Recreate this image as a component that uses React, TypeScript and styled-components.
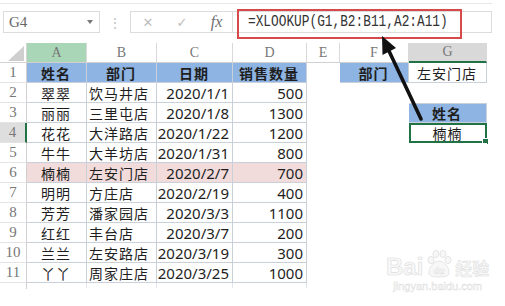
import React from 'react';
import styled, { createGlobalStyle } from 'styled-components';

const GlobalStyle = createGlobalStyle`
  html, body {
    margin: 0;
    padding: 0;
    background: #fff;
  }
  body {
    font-family: "Noto Sans CJK SC", "Noto Sans", sans-serif;
  }
`;

const cjk = `"Noto Sans CJK SC", "Noto Sans", sans-serif`;
const serif = `"Liberation Serif", "DejaVu Serif", serif`;
const gridLine = '#c9d0da';
const excelGreen = '#217346';

type Row = {
  a: string;
  b: string;
  c: string;
  d: string;
  pink?: boolean;
};

const rows: Row[] = [
  { a: '翠翠', b: '饮马井店', c: '2020/1/1', d: '500' },
  { a: '丽丽', b: '三里屯店', c: '2020/1/8', d: '1300' },
  { a: '花花', b: '大洋路店', c: '2020/1/22', d: '1200' },
  { a: '牛牛', b: '大羊坊店', c: '2020/1/31', d: '800' },
  { a: '楠楠', b: '左安门店', c: '2020/2/7', d: '700', pink: true },
  { a: '明明', b: '方庄店', c: '2020/2/19', d: '400' },
  { a: '芳芳', b: '潘家园店', c: '2020/3/3', d: '1100' },
  { a: '红红', b: '丰台店', c: '2020/3/7', d: '200' },
  { a: '兰兰', b: '左安路店', c: '2020/3/19', d: '300' },
  { a: '丫丫', b: '周家庄店', c: '2020/3/25', d: '1000' },
];

const columns = ['A', 'B', 'C', 'D', 'E', 'F', 'G'];

export default function App() {
  return (
    <Page>
      <GlobalStyle />
      <TopStrip />
      <FormulaBar>
        <NameBox>
          G4
          <Caret />
        </NameBox>
        <Dots>⋮</Dots>
        <FuncBox>
          <FuncIcon>✕</FuncIcon>
          <FuncIcon>✓</FuncIcon>
          <Fx>fx</Fx>
        </FuncBox>
        <FormulaInput>
          <Formula>=XLOOKUP(G1,B2:B11,A2:A11)</Formula>
          <Highlight />
        </FormulaInput>
      </FormulaBar>

      <Sheet>
        <Corner>
          <CornerTriangle />
        </Corner>
        {columns.map((col) => (
          <ColHead key={col} $green={col === 'A'} $selected={col === 'G'}>
            {col}
          </ColHead>
        ))}

        <RowHead>1</RowHead>
        <Cell $fill="blue" $line $bold>姓名</Cell>
        <Cell $fill="blue" $line $bold>部门</Cell>
        <Cell $fill="blue" $line $bold>日期</Cell>
        <Cell $fill="blue" $line $bold>销售数量</Cell>
        <Cell />
        <Cell $fill="blue" $line $bold>部门</Cell>
        <Cell $line>左安门店</Cell>

        {rows.map((r, i) => {
          const n = i + 2;
          const fill = r.pink ? 'pink' : undefined;
          return (
            <React.Fragment key={n}>
              <RowHead $selected={n === 4}>{n}</RowHead>
              <Cell $fill={fill} $line>{r.a}</Cell>
              <Cell $fill={fill} $line $align="left">{r.b}</Cell>
              <Cell $fill={fill} $line $num $align="right">{r.c}</Cell>
              <Cell $fill={fill} $line $num $align="right">{r.d}</Cell>
              <Cell />
              <Cell />
              {n === 3 && (
                <Cell $fill="blue" $line $top $bold>姓名</Cell>
              )}
              {n === 4 && (
                <Cell $selected>
                  楠楠
                  <FillHandle />
                </Cell>
              )}
              {n !== 3 && n !== 4 && <Cell />}
            </React.Fragment>
          );
        })}
        <RowHead $stub />
        <Stub />
        <Stub />
        <Stub />
        <Stub />
      </Sheet>

      <Arrow width="505" height="306" viewBox="0 0 505 306">
        <line x1="421" y1="119" x2="389" y2="51" stroke="#111" strokeWidth="3.6" strokeLinecap="round" />
        <polygon points="382,36 396,48 382.5,55" fill="#111" />
      </Arrow>

      <Watermark>
        <WmLogo>
          <WmBai>Bai</WmBai>
          <svg width="30" height="30" viewBox="0 0 30 30">
            <g fill="#f7f7f7" stroke="#e0e0e0" strokeWidth="0.8">
              <ellipse cx="7" cy="11" rx="3" ry="3.6" />
              <ellipse cx="12" cy="5" rx="3" ry="3.6" />
              <ellipse cx="19" cy="5" rx="3" ry="3.6" />
              <ellipse cx="24" cy="11" rx="3" ry="3.6" />
              <path d="M15 12 C9 12 4 20 5 25 C6 29 24 29 25 25 C26 20 21 12 15 12 Z" />
            </g>
            <text x="15" y="25" textAnchor="middle" fontSize="9" fontFamily="Liberation Sans, sans-serif" fontWeight="bold" fill="#fff" stroke="#e0e0e0" strokeWidth="0.5">du</text>
          </svg>
          <WmJing>经验</WmJing>
        </WmLogo>
        <WmUrl>jingyan.baidu.com</WmUrl>
      </Watermark>
    </Page>
  );
}

const Page = styled.div`
  position: relative;
  width: 505px;
  height: 306px;
  overflow: hidden;
  background: #fff;
`;

const TopStrip = styled.div`
  width: 492px;
  height: 3px;
  border-bottom: 1px solid #e8e8e8;
`;

const FormulaBar = styled.div`
  display: flex;
  align-items: stretch;
  height: 22px;
  margin-top: 7px;
`;

const NameBox = styled.div`
  box-sizing: border-box;
  width: 97px;
  margin-left: 3px;
  display: flex;
  align-items: center;
  justify-content: space-between;
  padding: 0 6px 0 5px;
  border: 1px solid #dcdcdc;
  font-family: ${serif};
  font-size: 15px;
  color: #666;
`;

const Caret = styled.span`
  width: 0;
  height: 0;
  border-left: 3px solid transparent;
  border-right: 3px solid transparent;
  border-top: 4px solid #777;
`;

const Dots = styled.div`
  width: 30px;
  display: flex;
  align-items: center;
  justify-content: center;
  color: #c4c4c4;
  font-size: 14px;
`;

const FuncBox = styled.div`
  box-sizing: border-box;
  width: 103px;
  display: grid;
  grid-template-columns: 34px 34px 35px;
  align-items: center;
  justify-items: center;
  border: 1px solid #dcdcdc;
`;

const FuncIcon = styled.span`
  color: #bdbdbd;
  font-family: "DejaVu Sans", sans-serif;
  font-size: 13px;
`;

const Fx = styled.span`
  color: #6f6f6f;
  font-family: ${serif};
  font-style: italic;
  font-size: 16px;
`;

const FormulaInput = styled.div`
  position: relative;
  box-sizing: border-box;
  width: 259px;
  display: flex;
  align-items: center;
  padding-left: 15px;
  border: 1px solid #dcdcdc;
  border-left: none;
`;

const Formula = styled.span`
  display: inline-block;
  font-family: "Liberation Mono", "DejaVu Sans Mono", monospace;
  font-size: 16px;
  color: #333;
  transform: scaleX(0.8);
  transform-origin: left center;
  white-space: nowrap;
`;

const Highlight = styled.div`
  position: absolute;
  left: 4px;
  top: -3px;
  width: 221px;
  height: 26px;
  border: 2px solid #d64a4b;
`;

const Sheet = styled.div`
  display: grid;
  grid-template-columns: 27px 60px 70px 76px 74px 33px 69px 78px;
  grid-auto-rows: 20px;
  margin-top: 10px;
`;

const Corner = styled.div`
  position: relative;
  box-sizing: border-box;
  border-right: 1px solid #d4d4d4;
  border-bottom: 1px solid #d4d4d4;
`;

const CornerTriangle = styled.div`
  position: absolute;
  right: 2px;
  bottom: 1px;
  width: 0;
  height: 0;
  border-left: 16px solid transparent;
  border-bottom: 15px solid #cfcfcf;
`;

const ColHead = styled.div<{ $green?: boolean; $selected?: boolean }>`
  box-sizing: border-box;
  display: flex;
  align-items: center;
  justify-content: center;
  font-family: ${serif};
  font-size: 14px;
  color: #777;
  border-right: 1px solid #d9d9d9;
  border-bottom: ${({ $selected }) => ($selected ? `2px solid ${excelGreen}` : '1px solid #d0d0d0')};
  background: ${({ $green, $selected }) => ($green ? '#a9d6b6' : $selected ? '#d9d9d9' : '#fff')};
`;

const RowHead = styled.div<{ $selected?: boolean; $stub?: boolean }>`
  box-sizing: border-box;
  display: flex;
  align-items: center;
  justify-content: center;
  font-family: ${serif};
  font-size: 15px;
  color: #777;
  border-bottom: ${({ $stub }) => ($stub ? 'none' : '1px solid #e4e4e4')};
  border-right: ${({ $selected }) => ($selected ? `2px solid ${excelGreen}` : '1px solid #d0d0d0')};
  background: ${({ $selected }) => ($selected ? '#dedede' : '#fff')};
  ${({ $stub }) => ($stub ? 'height: 6px;' : '')}
`;

const Stub = styled.div`
  box-sizing: border-box;
  height: 5px;
  border-right: 1px solid #e2e6ec;
`;

const fills: Record<string, string> = {
  blue: '#8db4e2',
  pink: '#f2dcdb',
};

const Cell = styled.div<{
  $fill?: string;
  $line?: boolean;
  $top?: boolean;
  $bold?: boolean;
  $num?: boolean;
  $align?: 'left' | 'center' | 'right';
  $selected?: boolean;
}>`
  position: relative;
  box-sizing: border-box;
  display: flex;
  align-items: center;
  justify-content: ${({ $align }) =>
    $align === 'left' ? 'flex-start' : $align === 'right' ? 'flex-end' : 'center'};
  padding: 0 3px 0 2px;
  white-space: nowrap;
  overflow: visible;
  background: ${({ $fill }) => ($fill ? fills[$fill] : '#fff')};
  color: #1e1e1e;
  font-family: ${({ $num }) => ($num ? `"Noto Sans", sans-serif` : cjk)};
  font-size: ${({ $num }) => ($num ? '15px' : '14px')};
  font-weight: ${({ $bold }) => ($bold ? 700 : 400)};
  letter-spacing: ${({ $num }) => ($num ? '0' : '1px')};
  border-right: ${({ $line }) => ($line ? `1px solid ${gridLine}` : 'none')};
  border-bottom: ${({ $line }) => ($line ? `1px solid ${gridLine}` : 'none')};
  border-top: ${({ $top }) => ($top ? `1px solid ${gridLine}` : 'none')};
  ${({ $selected }) => ($selected ? `border: 2px solid ${excelGreen};` : '')}
`;

const FillHandle = styled.span`
  position: absolute;
  right: -4px;
  bottom: -4px;
  width: 5px;
  height: 5px;
  background: ${excelGreen};
  border: 1px solid #fff;
`;

const Arrow = styled.svg`
  position: absolute;
  left: 0;
  top: 0;
  pointer-events: none;
`;

const Watermark = styled.div`
  position: absolute;
  left: 386px;
  top: 249px;
  display: flex;
  flex-direction: column;
  align-items: center;
`;

const WmLogo = styled.div`
  display: flex;
  align-items: flex-end;
  gap: 1px;
`;

const WmBai = styled.span`
  font-family: "Liberation Sans", sans-serif;
  font-weight: 700;
  font-size: 24px;
  line-height: 24px;
  color: #f7f7f7;
  -webkit-text-stroke: 0.6px #dedede;
`;

const WmJing = styled.span`
  font-family: ${cjk};
  font-weight: 700;
  font-size: 17px;
  line-height: 22px;
  color: #f7f7f7;
  -webkit-text-stroke: 0.5px #dedede;
`;

const WmUrl = styled.span`
  margin-top: 1px;
  font-family: "Liberation Sans", sans-serif;
  font-size: 11px;
  color: #f7f7f7;
  -webkit-text-stroke: 0.4px #dcdcdc;
`;
